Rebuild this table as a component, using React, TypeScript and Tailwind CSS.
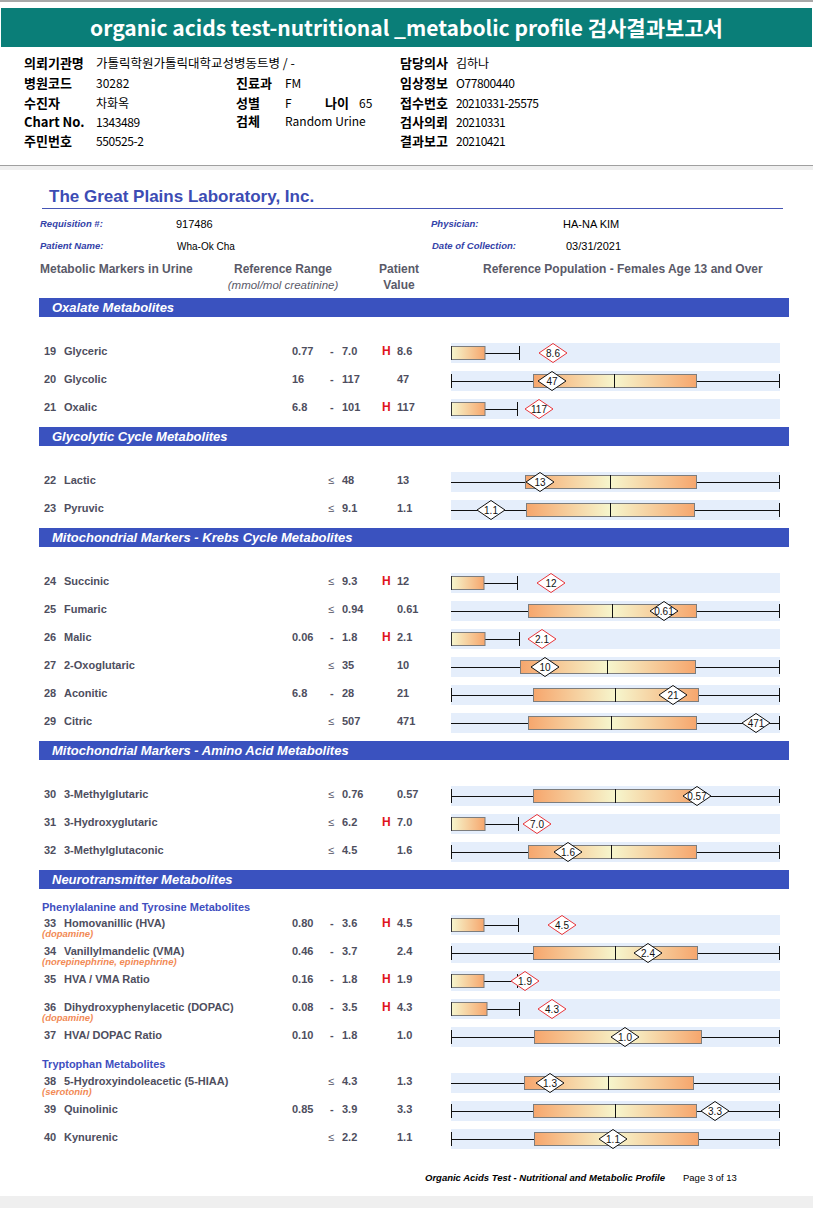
import React, { useId } from "react";

type ChartSpec =
  | { kind: "low"; boxR: number; wEnd: number; d: number; label: string; red: boolean }
  | { kind: "full"; tickL?: boolean; boxL: number; boxR: number; med: number; d: number; label: string; red?: boolean };

type RowSpec = {
  n: string;
  name: string;
  sub?: string;
  lo?: string;
  hi: string;
  h?: boolean;
  val: string;
  c: ChartSpec;
};

type Item = { t: "row"; r: RowSpec } | { t: "sub"; text: string; cls: string };

type Section = { title: string; gapTop: boolean; items: Item[] };

const X0 = 451;
const W = 329;

function Chart({ c }: { c: ChartSpec }) {
  const raw = useId();
  const id = raw.replace(/[^a-zA-Z0-9]/g, "");
  const x = (v: number) => v - X0;
  const orange = "#f6a66d";
  const pale = "#f6f6cd";
  const stroke = c.red ? "#e8353a" : "#111111";
  const cx = x(c.d);
  return (
    <svg width={W} height={20} className="block overflow-visible">
      <defs>
        <linearGradient id={`${id}a`} x1="0" x2="1" y1="0" y2="0">
          <stop offset="0" stopColor={orange} />
          <stop offset="1" stopColor={pale} />
        </linearGradient>
        <linearGradient id={`${id}b`} x1="0" x2="1" y1="0" y2="0">
          <stop offset="0" stopColor={pale} />
          <stop offset="1" stopColor={orange} />
        </linearGradient>
      </defs>
      <rect x={0} y={0} width={W} height={20} fill="#e5eefb" />
      {c.kind === "low" ? (
        <g>
          <line x1={x(c.boxR)} x2={x(c.wEnd)} y1={10.5} y2={10.5} stroke="#111" strokeWidth={1} />
          <line x1={x(c.wEnd) + 0.5} x2={x(c.wEnd) + 0.5} y1={3} y2={17} stroke="#111" strokeWidth={1} />
          <rect x={0.5} y={3.5} width={x(c.boxR) - 0.5} height={13} fill={`url(#${id}b)`} stroke="#7d7d7d" strokeWidth={1} />
          <line x1={0.5} x2={0.5} y1={3} y2={17} stroke="#333" strokeWidth={1} />
        </g>
      ) : (
        <g>
          {c.tickL && <line x1={0.5} x2={0.5} y1={3} y2={17} stroke="#111" strokeWidth={1} />}
          <line x1={0} x2={x(c.boxL)} y1={10.5} y2={10.5} stroke="#111" strokeWidth={1} />
          <line x1={x(c.boxR)} x2={328} y1={10.5} y2={10.5} stroke="#111" strokeWidth={1} />
          <line x1={328.5} x2={328.5} y1={3} y2={17} stroke="#111" strokeWidth={1} />
          <rect x={x(c.boxL) + 0.5} y={3.5} width={c.med - c.boxL} height={13} fill={`url(#${id}a)`} />
          <rect x={x(c.med) + 0.5} y={3.5} width={c.boxR - c.med} height={13} fill={`url(#${id}b)`} />
          <rect x={x(c.boxL) + 0.5} y={3.5} width={c.boxR - c.boxL} height={13} fill="none" stroke="#7d7d7d" strokeWidth={1} />
          <line x1={x(c.med) + 0.5} x2={x(c.med) + 0.5} y1={3} y2={17} stroke="#111" strokeWidth={1} />
        </g>
      )}
      <polygon
        points={`${cx - 14},10 ${cx},0.5 ${cx + 14},10 ${cx},19.5`}
        fill="#ffffff"
        stroke={stroke}
        strokeWidth={1}
      />
      <text
        x={cx}
        y={13.6}
        textAnchor="middle"
        fontSize={10}
        fontWeight={400}
        fontFamily="'Liberation Sans', Arial, sans-serif"
        fill="#111"
      >
        {c.label}
      </text>
    </svg>
  );
}

function DataRow({ r }: { r: RowSpec }) {
  return (
    <div className="flex h-[28px] items-start text-[11px] font-bold text-[#4e4e5e]">
      <div className="w-[42px] shrink-0" />
      <div className="w-[250px] shrink-0 pt-[5px]">
        <div className="flex leading-[14px] whitespace-nowrap">
          <span className="w-[22px] shrink-0 pl-[2px]">{r.n}</span>
          <span>{r.name}</span>
        </div>
        {r.sub && (
          <div className="-mt-[1px] whitespace-nowrap text-[9.5px] italic leading-[10px] text-[#f28a55]">{r.sub}</div>
        )}
      </div>
      <div className="w-[36px] shrink-0 pt-[5px] leading-[14px]">{r.lo ?? ""}</div>
      <div className="w-[14px] shrink-0 pt-[5px] leading-[14px]">
        {r.lo ? <span className="pl-[2px]">-</span> : <span className="font-normal">≤</span>}
      </div>
      <div className="w-[40px] shrink-0 pt-[5px] leading-[14px]">{r.hi}</div>
      <div className="w-[15px] shrink-0 pt-[5px] text-[12px] leading-[14px] text-[#e0141e]">{r.h ? "H" : ""}</div>
      <div className="w-[54px] shrink-0 pt-[5px] leading-[14px]">{r.val}</div>
      <div className="shrink-0 pt-[4px]">
        <Chart c={r.c} />
      </div>
    </div>
  );
}

const low = (boxR: number, wEnd: number, d: number, label: string): ChartSpec => ({
  kind: "low",
  boxR,
  wEnd,
  d,
  label,
  red: true,
});

const full = (
  boxL: number,
  boxR: number,
  med: number,
  d: number,
  label: string,
  tickL = false
): ChartSpec => ({ kind: "full", boxL, boxR, med, d, label, tickL });

const row = (r: RowSpec): Item => ({ t: "row", r });

const sections: Section[] = [
  {
    title: "Oxalate Metabolites",
    gapTop: true,
    items: [
      row({ n: "19", name: "Glyceric", lo: "0.77", hi: "7.0", h: true, val: "8.6", c: low(485, 519, 553, "8.6") }),
      row({ n: "20", name: "Glycolic", lo: "16", hi: "117", val: "47", c: full(533, 696, 614, 552, "47", true) }),
      row({ n: "21", name: "Oxalic", lo: "6.8", hi: "101", h: true, val: "117", c: low(485, 517, 539, "117") }),
    ],
  },
  {
    title: "Glycolytic Cycle Metabolites",
    gapTop: true,
    items: [
      row({ n: "22", name: "Lactic", hi: "48", val: "13", c: full(525, 696, 610, 540, "13") }),
      row({ n: "23", name: "Pyruvic", hi: "9.1", val: "1.1", c: full(526, 694, 610, 491, "1.1") }),
    ],
  },
  {
    title: "Mitochondrial Markers - Krebs Cycle Metabolites",
    gapTop: true,
    items: [
      row({ n: "24", name: "Succinic", hi: "9.3", h: true, val: "12", c: low(484, 517, 551, "12") }),
      row({ n: "25", name: "Fumaric", hi: "0.94", val: "0.61", c: full(528, 696, 612, 664, "0.61") }),
      row({ n: "26", name: "Malic", lo: "0.06", hi: "1.8", h: true, val: "2.1", c: low(485, 519, 542, "2.1") }),
      row({ n: "27", name: "2-Oxoglutaric", hi: "35", val: "10", c: full(520, 695, 607, 545, "10") }),
      row({ n: "28", name: "Aconitic", lo: "6.8", hi: "28", val: "21", c: full(533, 698, 615, 673, "21", true) }),
      row({ n: "29", name: "Citric", hi: "507", val: "471", c: full(528, 696, 611, 756, "471") }),
    ],
  },
  {
    title: "Mitochondrial Markers - Amino Acid Metabolites",
    gapTop: true,
    items: [
      row({ n: "30", name: "3-Methylglutaric", hi: "0.76", val: "0.57", c: full(533, 697, 615, 697, "0.57", true) }),
      row({ n: "31", name: "3-Hydroxyglutaric", hi: "6.2", h: true, val: "7.0", c: low(485, 518, 537, "7.0") }),
      row({ n: "32", name: "3-Methylglutaconic", hi: "4.5", val: "1.6", c: full(528, 696, 611, 568, "1.6", true) }),
    ],
  },
  {
    title: "Neurotransmitter Metabolites",
    gapTop: false,
    items: [
      { t: "sub", text: "Phenylalanine and Tyrosine Metabolites", cls: "h-[22px] pt-[12px]" },
      row({
        n: "33",
        name: "Homovanillic (HVA)",
        sub: "(dopamine)",
        lo: "0.80",
        hi: "3.6",
        h: true,
        val: "4.5",
        c: low(484, 518, 562, "4.5"),
      }),
      row({
        n: "34",
        name: "Vanillylmandelic (VMA)",
        sub: "(norepinephrine, epinephrine)",
        lo: "0.46",
        hi: "3.7",
        val: "2.4",
        c: full(533, 697, 615, 648, "2.4", true),
      }),
      row({ n: "35", name: "HVA / VMA Ratio", lo: "0.16", hi: "1.8", h: true, val: "1.9", c: low(484, 517, 525, "1.9") }),
      row({
        n: "36",
        name: "Dihydroxyphenylacetic (DOPAC)",
        sub: "(dopamine)",
        lo: "0.08",
        hi: "3.5",
        h: true,
        val: "4.3",
        c: low(487, 519, 552, "4.3"),
      }),
      row({ n: "37", name: "HVA/ DOPAC Ratio", lo: "0.10", hi: "1.8", val: "1.0", c: full(534, 701, 625, 625, "1.0", true) }),
      { t: "sub", text: "Tryptophan Metabolites", cls: "h-[18px] pt-[7px]" },
      row({
        n: "38",
        name: "5-Hydroxyindoleacetic (5-HIAA)",
        sub: "(serotonin)",
        hi: "4.3",
        val: "1.3",
        c: full(524, 693, 608, 550, "1.3"),
      }),
      row({ n: "39", name: "Quinolinic", lo: "0.85", hi: "3.9", val: "3.3", c: full(533, 696, 615, 715, "3.3", true) }),
      row({ n: "40", name: "Kynurenic", hi: "2.2", val: "1.1", c: full(534, 698, 613, 613, "1.1", true) }),
    ],
  },
];

function InfoLabel({ children, w }: { children: React.ReactNode; w: string }) {
  return <div className={`${w} shrink-0 whitespace-nowrap text-[13px] font-bold`}>{children}</div>;
}

export default function App() {
  return (
    <div className="w-[813px] h-[1208px] overflow-hidden bg-white text-black">
      {/* Top Korean report header */}
      <div className="border-t-2 border-[#a8a8a8] pt-[6px] font-['Noto_Sans_CJK_KR','Noto_Sans',sans-serif]">
        <div className="mx-[1px] flex h-[39px] items-center justify-center bg-[#0a7e78] text-[21px] font-bold text-white">
          organic acids test-nutritional _metabolic profile 검사결과보고서
        </div>
        <div className="pl-[24px] pt-[6px] pb-[16px] text-[12px] leading-[16px]">
          <div className="flex h-[20px] items-center">
            <InfoLabel w="w-[72px]">의뢰기관명</InfoLabel>
            <div className="w-[304px] shrink-0 whitespace-nowrap text-[12.5px]">가톨릭학원가톨릭대학교성병동트병 / -</div>
            <InfoLabel w="w-[56px]">담당의사</InfoLabel>
            <div>김하나</div>
          </div>
          <div className="flex h-[20px] items-center">
            <InfoLabel w="w-[72px]">병원코드</InfoLabel>
            <div className="w-[140px] shrink-0">30282</div>
            <InfoLabel w="w-[49px]">진료과</InfoLabel>
            <div className="w-[115px] shrink-0">FM</div>
            <InfoLabel w="w-[56px]">임상정보</InfoLabel>
            <div className="tracking-[-0.4px]">O77800440</div>
          </div>
          <div className="flex h-[19px] items-center">
            <InfoLabel w="w-[72px]">수진자</InfoLabel>
            <div className="w-[140px] shrink-0">차화옥</div>
            <InfoLabel w="w-[49px]">성별</InfoLabel>
            <div className="w-[40px] shrink-0">F</div>
            <InfoLabel w="w-[34px]">나이</InfoLabel>
            <div className="w-[41px] shrink-0">65</div>
            <InfoLabel w="w-[56px]">접수번호</InfoLabel>
            <div className="tracking-[-0.6px]">20210331-25575</div>
          </div>
          <div className="flex h-[20px] items-center">
            <InfoLabel w="w-[72px]">Chart No.</InfoLabel>
            <div className="w-[140px] shrink-0 tracking-[-0.4px]">1343489</div>
            <div className="w-[49px] shrink-0 -mt-[3px] text-[13px] font-bold">검체</div>
            <div className="w-[115px] shrink-0 -mt-[3px]">Random Urine</div>
            <InfoLabel w="w-[56px]">검사의뢰</InfoLabel>
            <div className="tracking-[-0.5px]">20210331</div>
          </div>
          <div className="flex h-[17px] items-center">
            <InfoLabel w="w-[72px]">주민번호</InfoLabel>
            <div className="w-[304px] shrink-0 tracking-[-0.4px]">550525-2</div>
            <InfoLabel w="w-[56px]">결과보고</InfoLabel>
            <div className="tracking-[-0.5px]">20210421</div>
          </div>
        </div>
      </div>
      <div className="h-[5px] border-t border-[#a0a0a0] bg-[#efefef]" />

      {/* Report page */}
      <div className="font-['Liberation_Sans',Arial,sans-serif]">
        <div className="pt-[17px]">
          <div className="ml-[42px] w-[741px] border-b border-[#4555b5] pb-[1px] pl-[7px] text-[17px] font-bold leading-[20px] text-[#3c4cb4]">
            The Great Plains Laboratory, Inc.
          </div>
        </div>
        <div className="mt-[4px] flex h-[22px] items-center">
          <div className="w-[40px] shrink-0" />
          <div className="w-[136px] shrink-0 text-[9.5px] font-bold italic text-[#3342a8]">Requisition #:</div>
          <div className="w-[255px] shrink-0 text-[11px]">917486</div>
          <div className="w-[132px] shrink-0 text-[9.5px] font-bold italic text-[#3342a8]">Physician:</div>
          <div className="text-[11px]">HA-NA KIM</div>
        </div>
        <div className="flex h-[22px] items-center">
          <div className="w-[40px] shrink-0" />
          <div className="w-[137px] shrink-0 text-[9.5px] font-bold italic text-[#3342a8]">Patient Name:</div>
          <div className="w-[255px] shrink-0 text-[10px]">Wha-Ok Cha</div>
          <div className="w-[134px] shrink-0 text-[9.5px] font-bold italic text-[#3342a8]">Date of Collection:</div>
          <div className="text-[11px]">03/31/2021</div>
        </div>
        <div className="pt-[5px] pb-[6px] text-[#5a5a68]">
          <div className="flex h-[14px] items-center text-[12px] font-bold leading-[14px]">
            <div className="w-[40px] shrink-0" />
            <div className="w-[186px] shrink-0">Metabolic Markers in Urine</div>
            <div className="w-[114px] shrink-0 text-center">Reference Range</div>
            <div className="w-[118px] shrink-0 text-center">Patient</div>
            <div className="pl-[25px] whitespace-nowrap">Reference Population - Females Age 13 and Over</div>
          </div>
          <div className="mt-[2px] flex h-[14px] items-center leading-[14px]">
            <div className="w-[226px] shrink-0" />
            <div className="w-[114px] shrink-0 text-center text-[11.5px] italic">(mmol/mol creatinine)</div>
            <div className="w-[118px] shrink-0 text-center text-[12px] font-bold">Value</div>
          </div>
        </div>

        {sections.map((s, i) => (
          <div key={s.title}>
            <div
              className={`${i === 0 ? "" : "mt-[4px]"} ml-[39px] flex h-[19px] w-[750px] items-center bg-[#3a52bf] pl-[13px] text-[13px] font-bold italic text-white`}
            >
              {s.title}
            </div>
            {s.gapTop && <div className="h-[22px]" />}
            {s.items.map((it, j) =>
              it.t === "row" ? (
                <DataRow key={j} r={it.r} />
              ) : (
                <div key={j} className={`${it.cls} pl-[42px] text-[11px] font-bold leading-[12px] text-[#3f4fbf]`}>
                  {it.text}
                </div>
              )
            )}
          </div>
        ))}

        <div className="flex h-[43px] pt-[19px] leading-[12px]">
          <div className="w-[425px] shrink-0" />
          <div className="w-[258px] shrink-0 whitespace-nowrap text-[9.5px] font-bold italic">
            Organic Acids Test - Nutritional and Metabolic Profile
          </div>
          <div className="text-[9.5px]">Page 3 of 13</div>
        </div>
        <div className="h-[12px] bg-[#efefef]" />
      </div>
    </div>
  );
}
